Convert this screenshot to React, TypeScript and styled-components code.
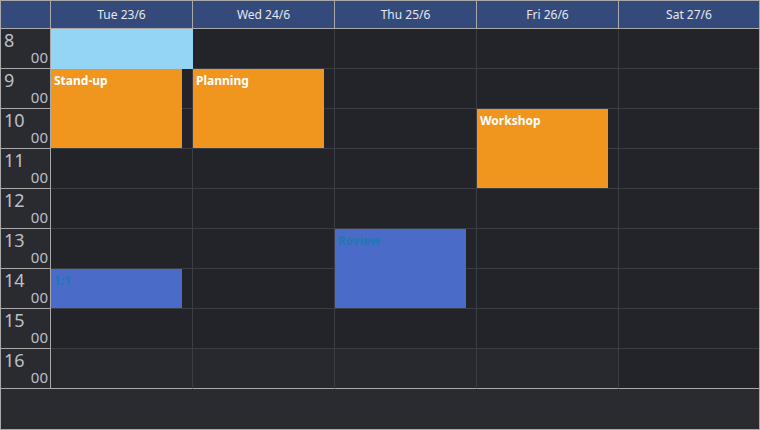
import styled, { createGlobalStyle } from "styled-components";

const days = ["Tue 23/6", "Wed 24/6", "Thu 25/6", "Fri 26/6", "Sat 27/6"];
const hours = [8, 9, 10, 11, 12, 13, 14, 15, 16];

type CalEvent = {
  day: number;
  start: number;
  length: number;
  title: string;
  kind: "orange" | "blue";
};

const events: CalEvent[] = [
  { day: 0, start: 9, length: 2, title: "Stand-up", kind: "orange" },
  { day: 1, start: 9, length: 2, title: "Planning", kind: "orange" },
  { day: 3, start: 10, length: 2, title: "Workshop", kind: "orange" },
  { day: 2, start: 13, length: 2, title: "Review", kind: "blue" },
  { day: 0, start: 14, length: 1, title: "1:1", kind: "blue" },
];

const ROW = 40;

export default function App() {
  return (
    <>
      <GlobalStyle />
      <Frame>
        <HeaderRow>
          <Corner />
          {days.map((d, i) => (
            <DayHead key={d} $last={i === days.length - 1}>
              {d}
            </DayHead>
          ))}
        </HeaderRow>
        <Body>
          <TimeColumn>
            {hours.map((h) => (
              <TimeCell key={h}>
                <Hour>{h}</Hour>
                <Minutes>00</Minutes>
              </TimeCell>
            ))}
          </TimeColumn>
          {days.map((d, di) => (
            <DayColumn key={d}>
              {hours.map((h, hi) => (
                <Cell
                  key={h}
                  $last={di === days.length - 1}
                  $final={hi === hours.length - 1}
                  $shaded={hi === hours.length - 1 && di < days.length - 1}
                />
              ))}
              {di === 0 && <Selection />}
              {events
                .filter((e) => e.day === di)
                .map((e) => (
                  <EventBox
                    key={e.title}
                    $kind={e.kind}
                    style={{
                      top: (e.start - 8) * ROW,
                      height: e.length * ROW - 1,
                    }}
                  >
                    {e.title}
                  </EventBox>
                ))}
            </DayColumn>
          ))}
        </Body>
        <Footer />
      </Frame>
    </>
  );
}

const GlobalStyle = createGlobalStyle`
  html, body {
    margin: 0;
    padding: 0;
    background: #2a2b30;
  }
`;

const Frame = styled.div`
  width: 760px;
  height: 430px;
  box-sizing: border-box;
  border: 1px solid #a9a9a9;
  background: #2a2b30;
  display: flex;
  flex-direction: column;
  font-family: "Noto Sans", "Open Sans", sans-serif;
  overflow: hidden;
`;

const columns = `50px repeat(4, 142px) 140px`;

const HeaderRow = styled.div`
  display: grid;
  grid-template-columns: ${columns};
  height: 28px;
  background: #344a7a;
`;

const Corner = styled.div`
  box-sizing: border-box;
  border-right: 1px solid #a9a9a9;
  border-bottom: 1px solid #a9a9a9;
`;

const DayHead = styled.div<{ $last?: boolean }>`
  box-sizing: border-box;
  border-right: ${(p) => (p.$last ? "none" : "1px solid #a9a9a9")};
  border-bottom: 1px solid #a9a9a9;
  display: flex;
  align-items: center;
  justify-content: center;
  color: #e4e8f0;
  font-size: 12px;
`;

const Body = styled.div`
  display: grid;
  grid-template-columns: ${columns};
`;

const TimeColumn = styled.div`
  display: flex;
  flex-direction: column;
  background: #2a2b30;
`;

const TimeCell = styled.div`
  box-sizing: border-box;
  height: ${ROW}px;
  border-right: 1px solid #a9a9a9;
  border-bottom: 1px solid #a9a9a9;
  display: flex;
  flex-direction: column;
  justify-content: space-between;
  padding: 1px 2px 3px 3px;
  color: #bcc0c8;
`;

const Hour = styled.span`
  font-size: 18px;
  line-height: 20px;
`;

const Minutes = styled.span`
  align-self: flex-end;
  font-size: 15px;
  line-height: 15px;
`;

const DayColumn = styled.div`
  position: relative;
  display: flex;
  flex-direction: column;
`;

const Cell = styled.div<{ $last?: boolean; $final?: boolean; $shaded?: boolean }>`
  box-sizing: border-box;
  height: ${ROW}px;
  background: ${(p) => (p.$shaded ? "#28292e" : "#232429")};
  border-right: ${(p) => (p.$last ? "none" : "1px solid #3a3d43")};
  border-bottom: 1px solid ${(p) => (p.$final ? "#a9a9a9" : "#3a3d43")};
`;

const Selection = styled.div`
  position: absolute;
  top: 0;
  left: 0;
  width: 142px;
  height: ${ROW}px;
  background: #94d4f4;
`;

const EventBox = styled.div<{ $kind: "orange" | "blue" }>`
  position: absolute;
  left: 0;
  width: 131px;
  box-sizing: border-box;
  padding: 4px 3px;
  background: ${(p) => (p.$kind === "orange" ? "#f0961f" : "#4a6cc8")};
  color: ${(p) => (p.$kind === "orange" ? "#ffffff" : "#1f78b2")};
  font-size: 12px;
  font-weight: 700;
  line-height: 16px;
`;

const Footer = styled.div`
  flex: 1;
  background: #2a2b30;
`;
